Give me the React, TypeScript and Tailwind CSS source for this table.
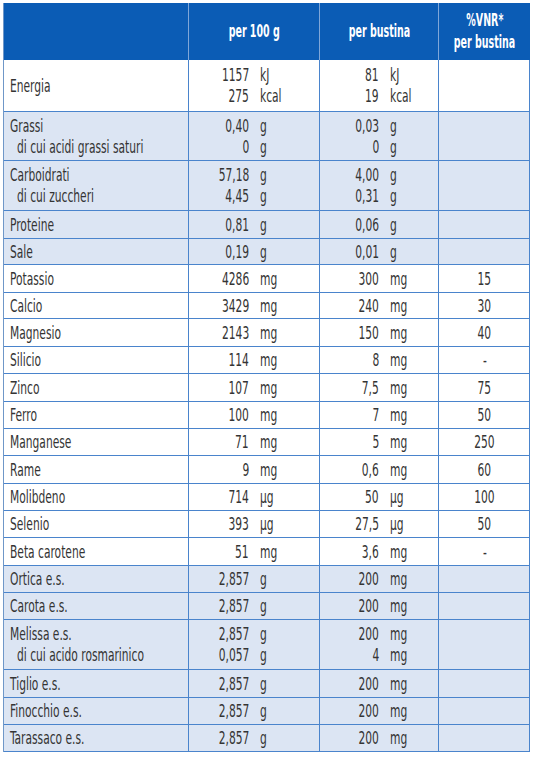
import React from "react";

type Row = {
  label: string[];
  v1: [string, string][];
  v2: [string, string][];
  vnr?: string;
  h: number;
  blue?: boolean;
};

const rows: Row[] = [
  { label: ["Energia"], v1: [["1157", "kJ"], ["275", "kcal"]], v2: [["81", "kJ"], ["19", "kcal"]], h: 52 },
  { label: ["Grassi", "di cui acidi grassi saturi"], v1: [["0,40", "g"], ["0", "g"]], v2: [["0,03", "g"], ["0", "g"]], h: 49, blue: true },
  { label: ["Carboidrati", "di cui zuccheri"], v1: [["57,18", "g"], ["4,45", "g"]], v2: [["4,00", "g"], ["0,31", "g"]], h: 50, blue: true },
  { label: ["Proteine"], v1: [["0,81", "g"]], v2: [["0,06", "g"]], h: 28, blue: true },
  { label: ["Sale"], v1: [["0,19", "g"]], v2: [["0,01", "g"]], h: 26, blue: true },
  { label: ["Potassio"], v1: [["4286", "mg"]], v2: [["300", "mg"]], vnr: "15", h: 28 },
  { label: ["Calcio"], v1: [["3429", "mg"]], v2: [["240", "mg"]], vnr: "30", h: 26 },
  { label: ["Magnesio"], v1: [["2143", "mg"]], v2: [["150", "mg"]], vnr: "40", h: 28 },
  { label: ["Silicio"], v1: [["114", "mg"]], v2: [["8", "mg"]], vnr: "-", h: 27 },
  { label: ["Zinco"], v1: [["107", "mg"]], v2: [["7,5", "mg"]], vnr: "75", h: 28 },
  { label: ["Ferro"], v1: [["100", "mg"]], v2: [["7", "mg"]], vnr: "50", h: 27 },
  { label: ["Manganese"], v1: [["71", "mg"]], v2: [["5", "mg"]], vnr: "250", h: 27 },
  { label: ["Rame"], v1: [["9", "mg"]], v2: [["0,6", "mg"]], vnr: "60", h: 28 },
  { label: ["Molibdeno"], v1: [["714", "µg"]], v2: [["50", "µg"]], vnr: "100", h: 27 },
  { label: ["Selenio"], v1: [["393", "µg"]], v2: [["27,5", "µg"]], vnr: "50", h: 27 },
  { label: ["Beta carotene"], v1: [["51", "mg"]], v2: [["3,6", "mg"]], vnr: "-", h: 28 },
  { label: ["Ortica e.s."], v1: [["2,857", "g"]], v2: [["200", "mg"]], h: 27, blue: true },
  { label: ["Carota e.s."], v1: [["2,857", "g"]], v2: [["200", "mg"]], h: 27, blue: true },
  { label: ["Melissa e.s.", "di cui acido rosmarinico"], v1: [["2,857", "g"], ["0,057", "g"]], v2: [["200", "mg"], ["4", "mg"]], h: 50, blue: true },
  { label: ["Tiglio e.s."], v1: [["2,857", "g"]], v2: [["200", "mg"]], h: 28, blue: true },
  { label: ["Finocchio e.s."], v1: [["2,857", "g"]], v2: [["200", "mg"]], h: 27, blue: true },
  { label: ["Tarassaco e.s."], v1: [["2,857", "g"]], v2: [["200", "mg"]], h: 27, blue: true },
];

const font = { fontFamily: '"DejaVu Sans Condensed", "DejaVu Sans", sans-serif' };

function L({ children }: { children: React.ReactNode }) {
  return <span className="inline-block whitespace-nowrap scale-x-[0.66] origin-left">{children}</span>;
}
function R({ children }: { children: React.ReactNode }) {
  return <span className="inline-block whitespace-nowrap scale-x-[0.66] origin-right">{children}</span>;
}
function C({ children, bold }: { children: React.ReactNode; bold?: boolean }) {
  return (
    <span className={`inline-block whitespace-nowrap origin-center ${bold ? "scale-x-[0.62]" : "scale-x-[0.66]"}`}>
      {children}
    </span>
  );
}

function Values({ vals, numW }: { vals: [string, string][]; numW: string }) {
  return (
    <div className="flex flex-col justify-center">
      {vals.map(([n, u], i) => (
        <div key={i} className="flex h-[21px] items-center">
          <span className={`${numW} text-right`}>
            <R>{n}</R>
          </span>
          <span className="pl-[11px]">
            <L>{u}</L>
          </span>
        </div>
      ))}
    </div>
  );
}

export default function App() {
  return (
    <div className="bg-white w-[536px] h-[757px] pt-[3px] pl-[3px] text-[18px] leading-none text-[#343434]" style={font}>
      <div className="w-[527px] border-l border-[#6f97c8]">
        <div className="grid grid-cols-[185px_131px_119px_91px] h-[57px] bg-[#0b5cb5] text-white font-bold text-[17px] border-r border-[#0b5cb5]">
          <div className="border-r border-[#7fa6d8]" />
          <div className="border-r border-[#7fa6d8] flex items-center justify-center">
            <C bold>per 100 g</C>
          </div>
          <div className="border-r border-[#7fa6d8] flex items-center justify-center">
            <C bold>per bustina</C>
          </div>
          <div className="flex flex-col items-center justify-center gap-[5px]">
            <C bold>%VNR*</C>
            <C bold>per bustina</C>
          </div>
        </div>
        {rows.map((r, i) => (
          <div
            key={i}
            className={`grid grid-cols-[185px_131px_119px_91px] border-b border-r border-[#4a84cc] ${r.blue ? "bg-[#dce5f3]" : "bg-white"}`}
            style={{ height: r.h }}
          >
            <div className="border-r border-[#4a84cc] flex flex-col justify-center pl-[6px]">
              {r.label.map((l, j) => (
                <div key={j} className={`h-[21px] flex items-center ${j > 0 ? "pl-[7px]" : ""}`}>
                  <L>{l}</L>
                </div>
              ))}
            </div>
            <div className="border-r border-[#4a84cc] flex">
              <Values vals={r.v1} numW="w-[60px]" />
            </div>
            <div className="border-r border-[#4a84cc] flex">
              <Values vals={r.v2} numW="w-[59px]" />
            </div>
            <div className="flex items-center justify-center">{r.vnr ? <C>{r.vnr}</C> : null}</div>
          </div>
        ))}
      </div>
    </div>
  );
}
